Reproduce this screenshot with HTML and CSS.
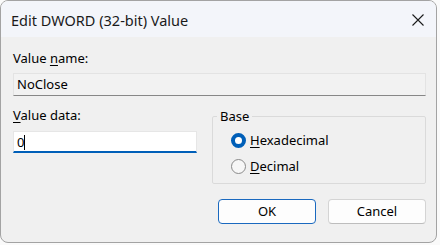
FILE: index.html
```html
<!DOCTYPE html>
<html lang="en">

<head>
    <meta charset="UTF-8">
    <meta name="viewport" content="width=device-width, initial-scale=1.0">
    <title>Edit DWORD (32-bit) Value</title>
    <link rel="stylesheet" href="styles.css">
</head>

<body>
    <div class="dialog">
        <div class="titlebar">
            <span class="title">Edit DWORD (32-bit) Value</span>
            <div class="close">
                <svg width="12" height="12" viewBox="0 0 12 12">
                    <path d="M0.5 0.5 L11.5 11.5 M11.5 0.5 L0.5 11.5" stroke="#1b1b1b" stroke-width="1.1" fill="none" />
                </svg>
            </div>
        </div>
        <div class="content">
            <div class="label">Value <u>n</u>ame:</div>
            <div class="field readonly">NoClose</div>
            <div class="row">
                <div class="col-data">
                    <div class="label"><u>V</u>alue data:</div>
                    <div class="field edit">0<span class="caret"></span></div>
                </div>
                <fieldset class="base">
                    <legend>Base</legend>
                    <div class="radio checked"><span class="dot"></span><span><u>H</u>exadecimal</span></div>
                    <div class="radio"><span class="dot"></span><span><u>D</u>ecimal</span></div>
                </fieldset>
            </div>
            <div class="buttons">
                <div class="btn default">OK</div>
                <div class="btn">Cancel</div>
            </div>
        </div>
    </div>
</body>

</html>
```

FILE: styles.css
```css
* {
    margin: 0;
    padding: 0;
    box-sizing: border-box;
}

body {
    background-color: #fafafa;
    font-family: "Noto Sans", "Open Sans", sans-serif;
    font-size: 13px;
    color: #000;
}

.dialog {
    width: 437px;
    height: 243px;
    border: 1px solid #a3a3a3;
    border-radius: 8px;
    background-color: #f0f0f0;
    overflow: hidden;
    display: flex;
    flex-direction: column;
}

.titlebar {
    height: 36px;
    display: flex;
    align-items: center;
    justify-content: space-between;
    background-color: #f3f5fa;
    padding: 0 12px 0 10px;
}

.title {
    font-size: 14.5px;
    color: #1a1a1a;
    margin-top: 2px;
}

.close {
    display: flex;
    margin-top: 2px;
}

.content {
    flex: 1;
    padding: 13px 10px 0 12px;
}

.label {
    height: 16px;
    line-height: 16px;
}

u {
    text-underline-offset: 2px;
}

.field {
    height: 23px;
    line-height: 21px;
    padding-left: 3px;
    margin-top: 7px;
}

.field.readonly {
    border: 1px solid #e3e3e3;
    border-bottom-color: #878787;
    background-color: #f2f2f2;
}

.field.edit {
    height: 22px;
    margin-top: 8px;
    border: 1px solid #e6e6e6;
    border-bottom: 2px solid #005fb8;
    background-color: #fff;
}

.caret {
    display: inline-block;
    width: 1px;
    height: 15px;
    background-color: #000;
    vertical-align: -3px;
}

.row {
    display: flex;
    gap: 15px;
    margin-top: 11px;
}

.col-data {
    width: 184px;
}

.base {
    flex: 1;
    border: 1px solid #dadada;
    border-radius: 2px;
    padding: 3px 4px 4px 18px;
    margin-top: 1px;
}

.base legend {
    padding: 0 3px;
    margin-left: -14px;
    line-height: 16px;
}

.radio {
    display: flex;
    align-items: center;
    gap: 4px;
    height: 26px;
}

.radio .dot {
    width: 15px;
    height: 15px;
    border-radius: 50%;
    border: 1px solid #8a8a8a;
    background-color: #f7f7f7;
}

.radio.checked .dot {
    border: 4px solid #005fb8;
    background-color: #fff;
}

.buttons {
    display: flex;
    justify-content: flex-end;
    gap: 12px;
    margin-top: 15px;
}

.btn {
    width: 98px;
    height: 25px;
    line-height: 23px;
    text-align: center;
    border: 1px solid #d4d4d4;
    border-bottom-color: #bdbdbd;
    border-radius: 4px;
    background-color: #fdfdfd;
}

.btn.default {
    border-color: #1a69bf;
}
```
